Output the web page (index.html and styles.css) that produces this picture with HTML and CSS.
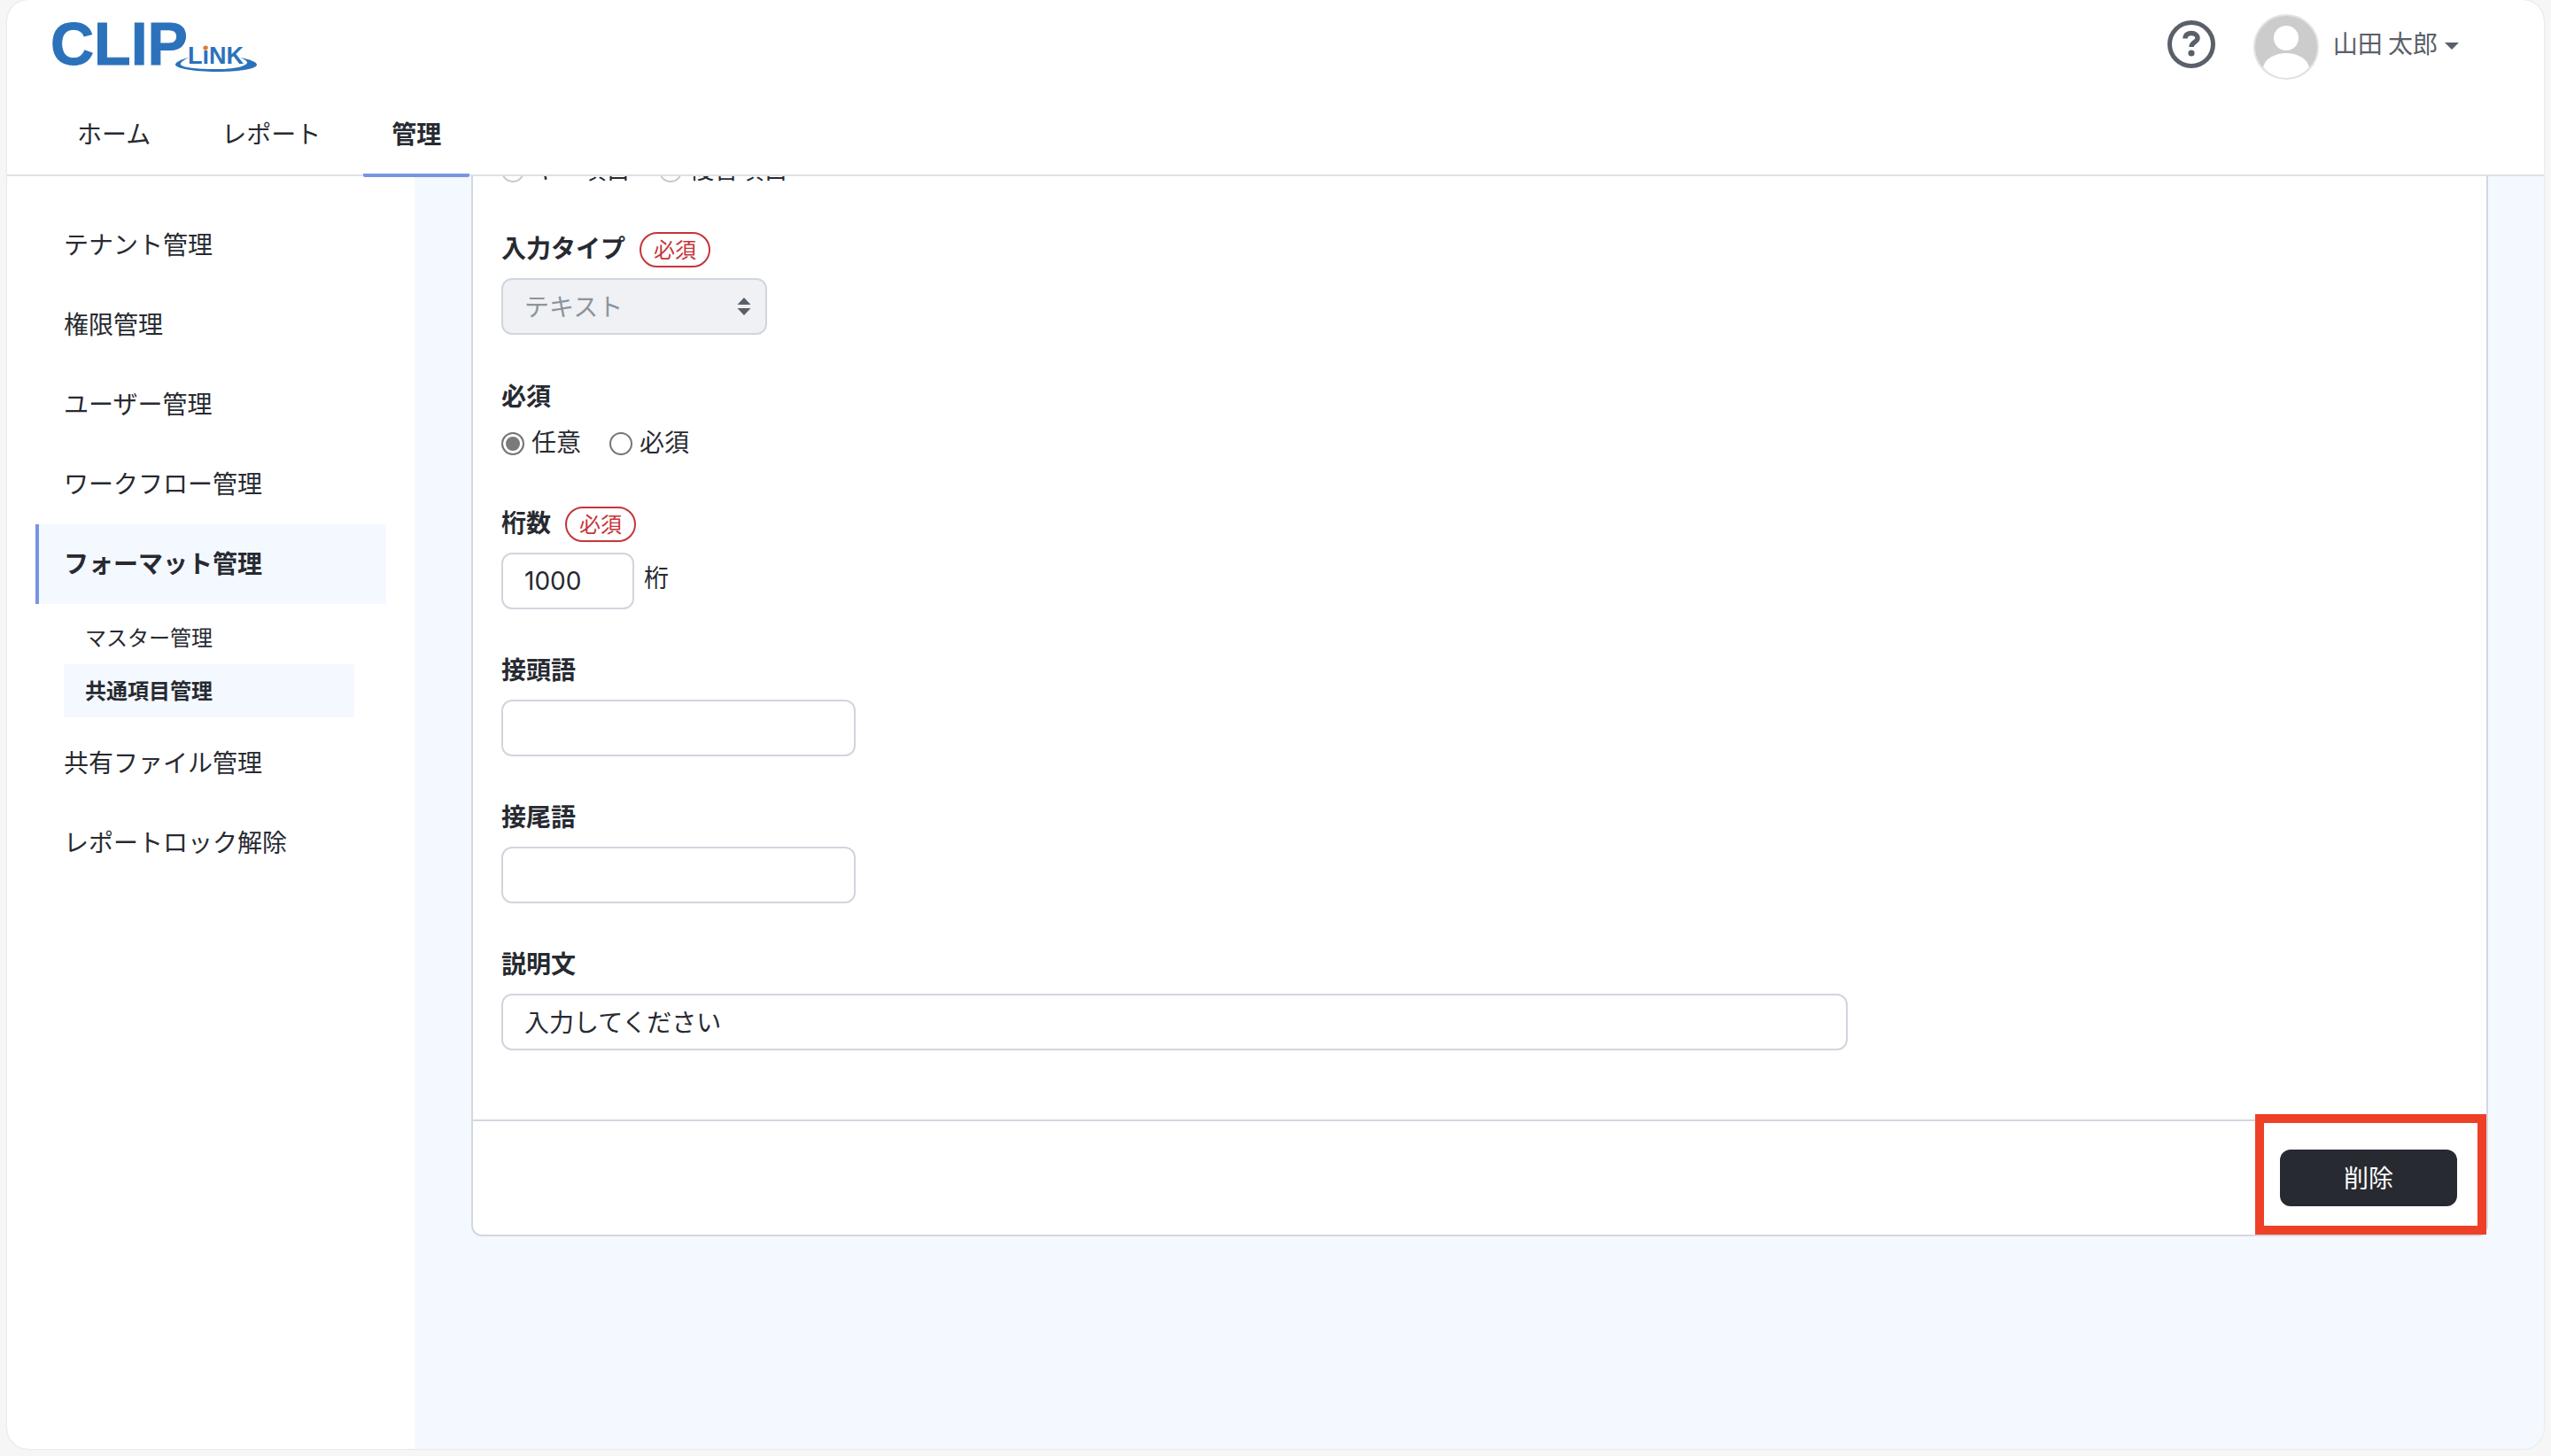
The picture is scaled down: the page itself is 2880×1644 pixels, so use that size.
FILE: index.html
```html
<!DOCTYPE html>
<html lang="ja">
<head>
<meta charset="utf-8">
<title>CLIP LiNK</title>
<link rel="stylesheet" href="styles.css">
</head>
<body>
<div class="window">
  <header class="header">
    <div class="header-top">
      <div class="logo">
        <span class="logo-clip">CLIP</span>
        <svg class="logo-link" width="94" height="40" viewBox="0 0 94 40">
          <path class="swoosh" d="M16 19 C8 21 1 24 1 27 C1 31 22 35 47 35 C72 35 93 32 93 27 C93 24 85 21 74 19 C82 22 84 25 80 27 C74 31 60 32 47 32 C30 32 10 31 7 27 C6 25 10 22 16 19 Z"/>
          <text class="logo-link-text" x="15" y="26">LiNK</text>
          <circle class="logo-dot" cx="35" cy="8" r="2.6"/>
        </svg>
      </div>
      <div class="user-area">
        <svg class="help" width="54" height="54" viewBox="0 0 54 54">
          <circle cx="27" cy="27" r="24.5" fill="none" stroke="#5a6069" stroke-width="5"/>
          <path d="M20 20.5 C20 16.5 23 14.5 27 14.5 C31 14.5 34 17 34 20 C34 24.5 27 24.5 27 30" fill="none" stroke="#5a6069" stroke-width="5.5"/>
          <circle cx="27" cy="37" r="3.6" fill="#5a6069"/>
        </svg>
        <svg class="avatar" width="74" height="74" viewBox="0 0 74 74">
          <circle cx="37" cy="37" r="36" fill="#cccccc" stroke="#e2e2e2" stroke-width="2"/>
          <circle cx="37" cy="27" r="14" fill="#ffffff"/>
          <path d="M11 60 C13 50 25 44 37 44 C49 44 61 50 63 60 C56 68 47 72 37 72 C27 72 18 68 11 60 Z" fill="#ffffff"/>
        </svg>
        <span class="user-name">山田 太郎</span>
        <span class="caret"></span>
      </div>
    </div>
    <nav class="tabs">
      <a class="tab">ホーム</a>
      <a class="tab">レポート</a>
      <a class="tab tab-active">管理</a>
    </nav>
  </header>
  <div class="body">
    <aside class="sidebar">
      <a class="side-item">テナント管理</a>
      <a class="side-item">権限管理</a>
      <a class="side-item">ユーザー管理</a>
      <a class="side-item">ワークフロー管理</a>
      <a class="side-item side-active">フォーマット管理</a>
      <div class="side-sub">
        <a class="sub-item">マスター管理</a>
        <a class="sub-item sub-active">共通項目管理</a>
      </div>
      <a class="side-item">共有ファイル管理</a>
      <a class="side-item">レポートロック解除</a>
    </aside>
    <main class="main">
      <section class="card">
        <div class="card-body">
          <div class="radio-row clipped-row">
            <label class="radio-option"><span class="radio"></span>キー項目</label>
            <label class="radio-option"><span class="radio"></span>複合項目</label>
          </div>
          <div class="field">
            <div class="label-row"><span class="field-label">入力タイプ</span><span class="badge">必須</span></div>
            <div class="select">
              <span class="select-text">テキスト</span>
              <svg class="select-arrows" width="16" height="20" viewBox="0 0 16 20"><path d="M8 0 L15.5 8 L0.5 8 Z M8 20 L15.5 12 L0.5 12 Z" fill="#5a6069"/></svg>
            </div>
          </div>
          <div class="field field-required">
            <div class="label-row label-row-tight"><span class="field-label">必須</span></div>
            <div class="radio-row">
              <label class="radio-option"><span class="radio radio-on"></span>任意</label>
              <label class="radio-option"><span class="radio"></span>必須</label>
            </div>
          </div>
          <div class="field field-compact">
            <div class="label-row"><span class="field-label">桁数</span><span class="badge">必須</span></div>
            <div class="input-line">
              <div class="input input-digits">1000</div>
              <span class="unit">桁</span>
            </div>
          </div>
          <div class="field field-compact">
            <div class="label-row"><span class="field-label">接頭語</span></div>
            <div class="input input-mid"></div>
          </div>
          <div class="field field-compact">
            <div class="label-row"><span class="field-label">接尾語</span></div>
            <div class="input input-mid"></div>
          </div>
          <div class="field">
            <div class="label-row"><span class="field-label">説明文</span></div>
            <div class="input input-wide">入力してください</div>
          </div>
        </div>
        <div class="card-footer">
          <button class="btn-delete">削除</button>
          <div class="highlight"></div>
        </div>
      </section>
    </main>
  </div>
</div>
</body>
</html>
```
FILE: styles.css
```css
* { box-sizing: border-box; }
html, body { margin: 0; padding: 0; height: 100%; }
body {
  background: #f6f6f6;
  font-family: "Noto Sans CJK JP", "Noto Sans", sans-serif;
  color: #272a31;
  font-size: 28px;
  overflow: hidden;
}
.window {
  width: 2864px;
  height: 1636px;
  margin-left: 8px;
  background: #fff;
  border-radius: 24px;
  box-shadow: 0 0 2px #cfcfcf;
  display: flex;
  flex-direction: column;
  overflow: hidden;
}
.header {
  height: 199px;
  border-bottom: 2px solid #dee2e8;
  flex: none;
}
.header-top {
  height: 109px;
  display: flex;
  justify-content: space-between;
  align-items: flex-start;
}
.logo {
  display: flex;
  align-items: flex-start;
  margin-left: 49px;
  padding-top: 10px;
}
.logo-clip {
  font-family: "Liberation Sans", sans-serif;
  font-weight: 700;
  font-size: 68px;
  line-height: 78px;
  color: #2b72bb;
  -webkit-text-stroke: 1px #2b72bb;
}
.logo-link { margin: 36px 0 0 -15px; }
.swoosh { fill: #2b72bb; }
.logo-link-text {
  font-family: "Liberation Sans", sans-serif;
  font-weight: 700;
  font-size: 27px;
  fill: #2b72bb;
}
.logo-dot { fill: #e07a2e; }
.user-area {
  display: flex;
  align-items: center;
  margin-top: 15px;
  margin-right: 96px;
}
.help { margin-right: 43px; align-self: flex-start; margin-top: 8px; }
.avatar { margin-right: 16px; }
.user-name { font-size: 28px; line-height: 66px; padding-bottom: 10px; color: #5a6069; }
.caret {
  margin-left: 8px;
  margin-bottom: 2px;
  border-left: 8px solid transparent;
  border-right: 8px solid transparent;
  border-top: 8px solid #5a6069;
}
.tabs {
  position: relative;
  z-index: 1;
  display: flex;
  align-items: flex-start;
  gap: 16px;
  height: 88px;
  margin-left: 47px;
}
.tab {
  padding: 0 32px;
  height: 91px;
  line-height: 82px;
  font-size: 28px;
}
.tab-active {
  font-weight: 700;
  border-bottom: 4px solid #7795e3;
  border-radius: 0 0 2px 2px;
}
.body { flex: 1; display: flex; min-height: 0; }
.sidebar {
  width: 460px;
  flex: none;
  padding: 33px 32px 0;
  display: flex;
  flex-direction: column;
}
.side-item {
  height: 90px;
  display: flex;
  align-items: center;
  padding: 0 0 4px 32px;
  font-size: 28px;
}
.side-active {
  background: #f4f8ff;
  border-left: 4px solid #7795e3;
  padding-left: 28px;
  font-weight: 700;
}
.side-sub {
  padding: 8px 0 7px 32px;
  display: flex;
  flex-direction: column;
}
.sub-item {
  width: 328px;
  height: 60px;
  display: flex;
  align-items: center;
  padding: 0 0 3px 24px;
  font-size: 24px;
}
.sub-active { background: #f4f8ff; font-weight: 700; }
.main {
  flex: 1;
  min-width: 0;
  background: #f4f8ff;
  padding: 0 63px 0 64px;
  overflow: hidden;
}
.card {
  background: #fff;
  border: 2px solid #d2d7e0;
  border-top: 0;
  border-radius: 0 0 12px 12px;
  margin-top: -29px;
}
.card-body {
  height: 1096px;
  padding: 0 32px;
  border-bottom: 2px solid #d2d7e0;
}
.clipped-row { margin-bottom: 46px; }
.field { margin-bottom: 49px; }
.field-required { margin-bottom: 48px; }
.field-compact { margin-bottom: 48px; }
.label-row {
  display: flex;
  align-items: center;
  height: 40px;
  margin-bottom: 14px;
}
.label-row-tight { margin-bottom: 11px; }
.field-label { font-size: 28px; font-weight: 700; line-height: 38px; padding-bottom: 2px; }
.badge {
  margin: 4px 0 0 16px;
  width: 80px;
  height: 40px;
  border: 2px solid #c7353a;
  border-radius: 20px;
  color: #c7353a;
  font-size: 24px;
  line-height: 34px;
  text-align: center;
}
.select {
  width: 300px;
  height: 64px;
  background: #eff1f4;
  border: 2px solid #d0d6de;
  border-radius: 12px;
  display: flex;
  align-items: center;
  justify-content: space-between;
  padding: 0 16px 0 24px;
  color: #8d949c;
}
.select-text { padding-bottom: 2px; }
.radio-row {
  display: flex;
  align-items: center;
  height: 44px;
  gap: 32px;
}
.radio-option { display: flex; align-items: center; gap: 8px; line-height: 40px; padding-bottom: 4px; }
.radio {
  width: 26px;
  height: 26px;
  margin-top: 6px;
  border: 2px solid #767676;
  border-radius: 50%;
  background: #fff;
  flex: none;
}
.radio-on { box-shadow: inset 0 0 0 3px #fff; background: #7a7a7a; }
.clipped-row .radio { border-color: #c8c8c8; }
.input {
  height: 64px;
  background: #fff;
  border: 2px solid #d0d6de;
  border-radius: 12px;
  padding: 0 24px 2px;
  display: flex;
  align-items: center;
  font-size: 28px;
}
.input-line { display: flex; }
.input-digits { width: 150px; font-family: Inter, sans-serif; padding-bottom: 0; }
.unit { margin-left: 11px; line-height: 54px; }
.input-mid { width: 400px; }
.input-wide { width: 1520px; }
.card-footer {
  position: relative;
  height: 128px;
  display: flex;
  justify-content: flex-end;
  align-items: flex-start;
  padding: 32px 33px 0 0;
}
.btn-delete {
  width: 200px;
  height: 64px;
  padding: 0 0 2px;
  background: #272a31;
  color: #fff;
  border: 0;
  border-radius: 12px;
  font-family: inherit;
  font-size: 28px;
}
.highlight {
  position: absolute;
  right: 0;
  top: -8px;
  width: 261px;
  height: 136px;
  border: 10px solid #ee4026;
}
```
